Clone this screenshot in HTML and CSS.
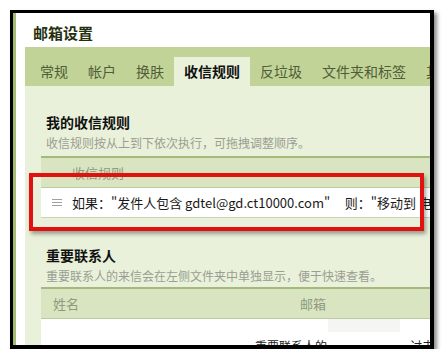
FILE: index.html
```html
<!DOCTYPE html>
<html lang="zh-CN">
<head>
<meta charset="utf-8">
<title>邮箱设置</title>
<link rel="stylesheet" href="styles.css">
</head>
<body>
<div class="frame">
  <div class="app">
    <div class="title">邮箱设置</div>
    <div class="tabs">
      <div class="tab">常规</div>
      <div class="tab">帐户</div>
      <div class="tab">换肤</div>
      <div class="tab active">收信规则</div>
      <div class="tab">反垃圾</div>
      <div class="tab">文件夹和标签</div>
      <div class="tab">其他</div>
    </div>
    <div class="content">
      <div class="section">
        <div class="heading">我的收信规则</div>
        <div class="desc">收信规则按从上到下依次执行，可拖拽调整顺序。</div>
        <div class="table">
          <div class="thead"><span class="th-rule">收信规则</span></div>
          <div class="trow">
            <svg class="handle" width="10" height="8" viewBox="0 0 10 8"><path d="M0 0.5H10M0 3.5H10M0 6.5H10" stroke="#a0a0a0" stroke-width="1"/></svg>
            <span class="rule-text">如果："发件人包含 gdtel@gd.ct10000.com"&nbsp;&nbsp;&nbsp;&nbsp;&nbsp;则："移动到 电信"</span>
          </div>
        </div>
      </div>
      <div class="section second">
        <div class="heading">重要联系人</div>
        <div class="desc">重要联系人的来信会在左侧文件夹中单独显示，便于快速查看。</div>
        <div class="table">
          <div class="thead"><span class="th-name">姓名</span><span class="th-mail">邮箱</span></div>
          <div class="tbody">
            <div class="placeholder"></div>
            <div class="empty"><span class="empty-a">重要联系人的</span><span class="empty-b">讨去</span></div>
          </div>
        </div>
      </div>
    </div>
  </div>
  <div class="highlight"></div>
</div>
</body>
</html>
```

FILE: styles.css
```css
html, body {
  margin: 0;
  padding: 0;
  background: #fff;
}
body {
  font-family: "Noto Sans CJK SC", "Noto Sans", sans-serif;
  overflow: hidden;
}
.frame {
  position: relative;
  margin: 10px 0 0 10px;
  width: 424px;
  height: 339px;
  box-sizing: border-box;
  border: 3px solid #000;
  border-right-width: 4px;
  border-bottom-width: 4px;
  box-shadow: 3px 3px 4px rgba(0,0,0,0.45);
  background: #fff;
  overflow: hidden;
}
.app {
  height: 100%;
  border-left: 3px solid #a5bb72;
  padding-left: 9px;
  display: flex;
  flex-direction: column;
}
.title {
  height: 34px;
  line-height: 40px;
  padding-left: 8px;
  font-size: 15px;
  font-weight: bold;
  color: #26300f;
  flex: none;
}
.tabs {
  flex: none;
  height: 39px;
  background: #c2d397;
  display: flex;
  align-items: flex-end;
  padding-left: 5px;
  white-space: nowrap;
  overflow: hidden;
}
.tab {
  flex: none;
  height: 29px;
  line-height: 29px;
  padding: 0 10px;
  font-size: 14px;
  color: #4f5d38;
}
.tab.active {
  background: #e9f1da;
  color: #111;
  font-weight: bold;
}
.content {
  flex: 1;
  background: #e9f1da;
  padding-left: 16px;
  overflow: hidden;
}
.section {
  padding-top: 24px;
  width: 460px;
}
.section.second {
  padding-top: 25px;
}
.heading {
  padding-left: 5px;
  font-size: 14px;
  line-height: 24px;
  font-weight: bold;
  color: #111;
}
.desc {
  padding-left: 5px;
  font-size: 12px;
  line-height: 18px;
  color: #9a9e92;
}
.table {
  margin-top: 4px;
  border-top: 2px solid #a5b97c;
}
.second .table {
  margin-top: 2px;
}
.thead {
  height: 29px;
  line-height: 29px;
  background: #d8e5c0;
  border-bottom: 1px solid #bccaa2;
  font-size: 13px;
  color: #8f9a80;
  display: flex;
}
.th-rule {
  padding-left: 31px;
}
.th-name {
  padding-left: 12px;
  width: 247px;
}
.trow {
  height: 29px;
  background: #fff;
  border-bottom: 1px solid #c8d3b4;
  display: flex;
  align-items: center;
  white-space: nowrap;
}
.handle {
  margin-left: 11px;
  margin-right: 10px;
  flex: none;
}
.rule-text {
  font-size: 13px;
  color: #1a1a1a;
}
.tbody {
  background: #fff;
  height: 60px;
  position: relative;
}
.placeholder {
  margin-left: 287px;
  width: 72px;
  height: 13px;
  background: #f5f6f4;
}
.empty {
  display: flex;
  padding-top: 6px;
  font-size: 12px;
  line-height: 16px;
  color: #222;
}
.empty-a {
  padding-left: 214px;
  width: 155px;
}
.highlight {
  position: absolute;
  left: 16px;
  top: 160px;
  width: 395px;
  height: 58px;
  box-sizing: border-box;
  border: 4px solid #e2110f;
  box-shadow: 2px 3px 4px rgba(0,0,0,0.35);
  pointer-events: none;
}
```
